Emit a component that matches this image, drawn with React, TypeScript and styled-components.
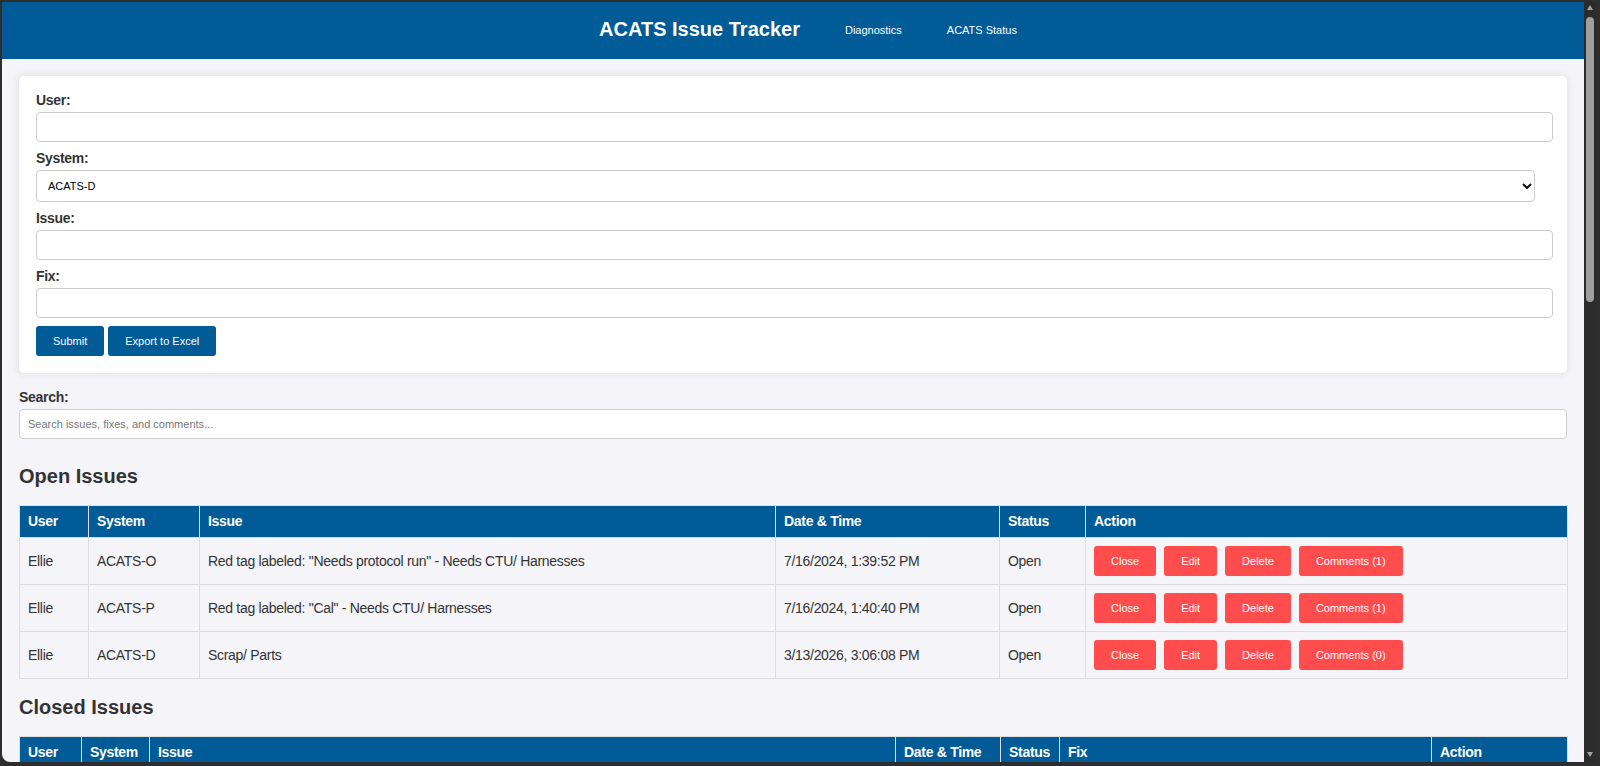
import React from 'react'
import styled, { createGlobalStyle } from 'styled-components'

const GlobalStyle = createGlobalStyle`
    html, body {
        margin: 0;
        padding: 0;
        background: #2e2e2e;
        font-family: "Liberation Sans", Arial, sans-serif;
    }
`

type Issue = {
    user: string
    system: string
    issue: string
    date: string
    status: string
    comments: number
}

const openIssues: Issue[] = [
    { user: 'Ellie', system: 'ACATS-O', issue: 'Red tag labeled: "Needs protocol run" - Needs CTU/ Harnesses', date: '7/16/2024, 1:39:52 PM', status: 'Open', comments: 1 },
    { user: 'Ellie', system: 'ACATS-P', issue: 'Red tag labeled: "Cal" - Needs CTU/ Harnesses', date: '7/16/2024, 1:40:40 PM', status: 'Open', comments: 1 },
    { user: 'Ellie', system: 'ACATS-D', issue: 'Scrap/ Parts', date: '3/13/2026, 3:06:08 PM', status: 'Open', comments: 0 },
]

const openCols = [69, 111, 576, 224, 86, 482]
const closedCols = [62, 68, 746, 105, 59, 372, 136]

const App = () => {
  return (
      <Frame>
          <GlobalStyle />
          <Viewport>
              <Header>
                  <Title>ACATS Issue Tracker</Title>
                  <NavLink href="#">Diagnostics</NavLink>
                  <NavLink href="#">ACATS Status</NavLink>
              </Header>
              <Main>
                  <Card>
                      <Label>User:</Label>
                      <Input type="text" />
                      <Label>System:</Label>
                      <SelectWrap>
                          <Select defaultValue="ACATS-D">
                              <option>ACATS-D</option>
                              <option>ACATS-O</option>
                              <option>ACATS-P</option>
                          </Select>
                          <Chevron viewBox="0 0 10 6">
                              <polyline points="1,1 5,5 9,1" fill="none" stroke="#111" strokeWidth="2" />
                          </Chevron>
                      </SelectWrap>
                      <Label>Issue:</Label>
                      <Input type="text" />
                      <Label>Fix:</Label>
                      <Input type="text" />
                      <ButtonRow>
                          <Button>Submit</Button>
                          <Button>Export to Excel</Button>
                      </ButtonRow>
                  </Card>

                  <SearchBlock>
                      <Label>Search:</Label>
                      <SearchInput type="text" placeholder="Search issues, fixes, and comments..." />
                  </SearchBlock>

                  <Heading>Open Issues</Heading>
                  <Table>
                      <colgroup>
                          {openCols.map((w, i) => <Col key={i} $w={w} />)}
                      </colgroup>
                      <thead>
                          <tr>
                              <Th>User</Th>
                              <Th>System</Th>
                              <Th>Issue</Th>
                              <Th>Date &amp; Time</Th>
                              <Th>Status</Th>
                              <Th>Action</Th>
                          </tr>
                      </thead>
                      <tbody>
                          {openIssues.map((row, i) => (
                              <tr key={i}>
                                  <Td>{row.user}</Td>
                                  <Td>{row.system}</Td>
                                  <Td>{row.issue}</Td>
                                  <Td>{row.date}</Td>
                                  <Td>{row.status}</Td>
                                  <Td>
                                      <Actions>
                                          <RedButton>Close</RedButton>
                                          <RedButton>Edit</RedButton>
                                          <RedButton>Delete</RedButton>
                                          <RedButton>Comments ({row.comments})</RedButton>
                                      </Actions>
                                  </Td>
                              </tr>
                          ))}
                      </tbody>
                  </Table>

                  <Heading>Closed Issues</Heading>
                  <Table>
                      <colgroup>
                          {closedCols.map((w, i) => <Col key={i} $w={w} />)}
                      </colgroup>
                      <thead>
                          <tr>
                              <Th>User</Th>
                              <Th>System</Th>
                              <Th>Issue</Th>
                              <Th>Date &amp; Time</Th>
                              <Th>Status</Th>
                              <Th>Fix</Th>
                              <Th>Action</Th>
                          </tr>
                      </thead>
                  </Table>
              </Main>
          </Viewport>
          <ScrollBar>
              <ArrowUp />
              <Thumb />
              <ArrowDown />
          </ScrollBar>
      </Frame>
  )
}

export default App

const Frame = styled.div`
    display: flex;
    height: 100vh;
    box-sizing: border-box;
    padding: 2px 4px 4px 2px;
    background: #2e2e2e;
`
const Viewport = styled.div`
    flex: 1;
    min-width: 0;
    overflow: hidden;
    background-color: #f4f4f9;
    border-bottom-left-radius: 8px;
`
const ScrollBar = styled.div`
    width: 12px;
    display: flex;
    flex-direction: column;
    align-items: center;
    padding: 3px 0 5px;
    box-sizing: border-box;
    background: #2b2b2b;
`
const ArrowUp = styled.div`
    width: 0;
    height: 0;
    border-left: 3px solid transparent;
    border-right: 3px solid transparent;
    border-bottom: 5px solid #a3a3a3;
`
const ArrowDown = styled.div`
    width: 0;
    height: 0;
    margin-top: auto;
    border-left: 3px solid transparent;
    border-right: 3px solid transparent;
    border-top: 5px solid #a3a3a3;
`
const Thumb = styled.div`
    width: 8px;
    height: 285px;
    margin-top: 7px;
    border-radius: 4px;
    background: #9f9f9f;
`
const Header = styled.header`
    height: 57px;
    box-sizing: border-box;
    display: flex;
    justify-content: center;
    align-items: center;
    gap: 45px;
    padding: 0 0 2px 30px;
    background-color: #005b96;
    color: #fff;
`
const Title = styled.h1`
    margin: 0;
    font-size: 20px;
    font-weight: bold;
`
const NavLink = styled.a`
    color: #fff;
    font-size: 11px;
    text-decoration: none;
`
const Main = styled.main`
    padding: 17px;
`
const Card = styled.div`
    background-color: #fff;
    border-radius: 5px;
    box-shadow: 0 0 10px rgba(0, 0, 0, 0.1);
    padding: 16px 32px 17px 17px;
`
const Label = styled.label`
    display: block;
    font-size: 14px;
    line-height: 16px;
    font-weight: bold;
    color: #333;
    letter-spacing: -0.3px;
    margin-bottom: 4px;
`
const Input = styled.input`
    display: block;
    width: 100%;
    height: 12px;
    padding: 8px;
    margin: 0 0 8px;
    font-family: inherit;
    font-size: 11px;
    border: 1px solid #ccc;
    border-radius: 4px;
    outline: none;
`
const SelectWrap = styled.div`
    position: relative;
    margin-bottom: 8px;
`
const Select = styled.select`
    appearance: none;
    display: block;
    width: 100%;
    height: 32px;
    box-sizing: border-box;
    padding: 0 20px 0 11px;
    font-family: inherit;
    font-size: 11px;
    color: #000;
    background: #fff;
    border: 1px solid #ccc;
    border-radius: 4px;
    outline: none;
`
const Chevron = styled.svg`
    position: absolute;
    right: 3px;
    top: 13px;
    width: 10px;
    height: 6px;
    pointer-events: none;
`
const ButtonRow = styled.div`
    display: flex;
    gap: 4px;
`
const Button = styled.button`
    height: 30px;
    padding: 0 17px;
    font-family: inherit;
    font-size: 11px;
    color: #fff;
    background-color: #005b96;
    border: none;
    border-radius: 3px;
    cursor: pointer;
`
const SearchBlock = styled.div`
    margin: 16px 0 26px;
`
const SearchInput = styled.input`
    display: block;
    width: 100%;
    height: 30px;
    box-sizing: border-box;
    padding: 0 8px;
    font-family: inherit;
    font-size: 11px;
    background: #fff;
    border: 1px solid #ccc;
    border-radius: 4px;
    outline: none;
    &::placeholder {
        color: #777;
    }
`
const Heading = styled.h2`
    margin: 17px 0 17px;
    font-size: 20px;
    line-height: 23px;
    font-weight: bold;
    color: #333;
`
const Table = styled.table`
    width: 100%;
    table-layout: fixed;
    border-collapse: collapse;
`
const Col = styled.col<{ $w: number }>`
    width: ${p => p.$w}px;
`
const Th = styled.th`
    padding: 8px;
    line-height: 15px;
    text-align: left;
    font-size: 14px;
    font-weight: bold;
    letter-spacing: -0.3px;
    color: #fff;
    background-color: #005b96;
    border: 1px solid #ddd;
`
const Td = styled.td`
    padding: 8px;
    font-size: 14px;
    letter-spacing: -0.3px;
    color: #333;
    border: 1px solid #ddd;
    vertical-align: middle;
`
const Actions = styled.div`
    display: flex;
    gap: 8px;
`
const RedButton = styled.button`
    height: 30px;
    padding: 0 17px;
    font-family: inherit;
    font-size: 11px;
    color: #fff;
    background-color: #ff4d4d;
    border: none;
    border-radius: 3px;
    cursor: pointer;
`
